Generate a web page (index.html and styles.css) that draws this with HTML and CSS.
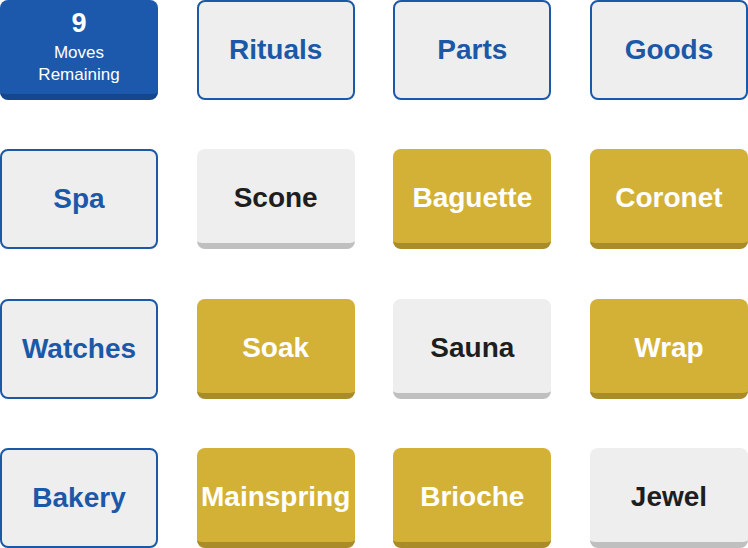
FILE: index.html
```html
<!DOCTYPE html>
<html lang="en">
<head>
  <meta charset="UTF-8">
  <title>Connections Board</title>
  <link rel="stylesheet" href="styles.css">
</head>
<body>
  <div class="board">
    <div class="tile tile-counter">
      <span class="moves-count">9</span>
      <span class="moves-label">Moves<br>Remaining</span>
    </div>
    <div class="tile tile-outline">Rituals</div>
    <div class="tile tile-outline">Parts</div>
    <div class="tile tile-outline">Goods</div>

    <div class="tile tile-outline">Spa</div>
    <div class="tile tile-plain">Scone</div>
    <div class="tile tile-gold">Baguette</div>
    <div class="tile tile-gold">Coronet</div>

    <div class="tile tile-outline">Watches</div>
    <div class="tile tile-gold">Soak</div>
    <div class="tile tile-plain">Sauna</div>
    <div class="tile tile-gold">Wrap</div>

    <div class="tile tile-outline">Bakery</div>
    <div class="tile tile-gold">Mainspring</div>
    <div class="tile tile-gold">Brioche</div>
    <div class="tile tile-plain">Jewel</div>
  </div>
</body>
</html>
```

FILE: styles.css
```css
body {
  margin: 0;
  background: #ffffff;
  font-family: 'Liberation Sans', Arial, Helvetica, sans-serif;
}
.board {
  width: 748px;
  height: 548px;
  display: grid;
  grid-template-columns: repeat(4, 158px);
  grid-template-rows: repeat(4, 100px);
  justify-content: space-between;
  align-content: space-between;
}
.tile {
  box-sizing: border-box;
  display: flex;
  flex-direction: column;
  align-items: center;
  justify-content: center;
  border-radius: 8px;
  font-size: 28px;
  font-weight: bold;
  text-align: center;
  white-space: nowrap;
}
.tile-outline {
  background: #eeeeee;
  border: 2px solid #1c58a8;
  color: #1c58a8;
}
.tile-plain {
  background: #eeeeee;
  border-bottom: 6px solid #bfbfbf;
  color: #1e1e1e;
  padding-top: 4px;
}
.tile-gold {
  background: #d3b137;
  border-bottom: 6px solid #a98b2a;
  color: #ffffff;
  padding-top: 4px;
}
.tile-counter {
  background: #1c58ab;
  border-bottom: 6px solid #15478c;
  color: #ffffff;
}
.moves-count {
  font-size: 27px;
  line-height: 30px;
}
.moves-label {
  margin-top: 4px;
  font-size: 17px;
  font-weight: normal;
  line-height: 22px;
}
```
